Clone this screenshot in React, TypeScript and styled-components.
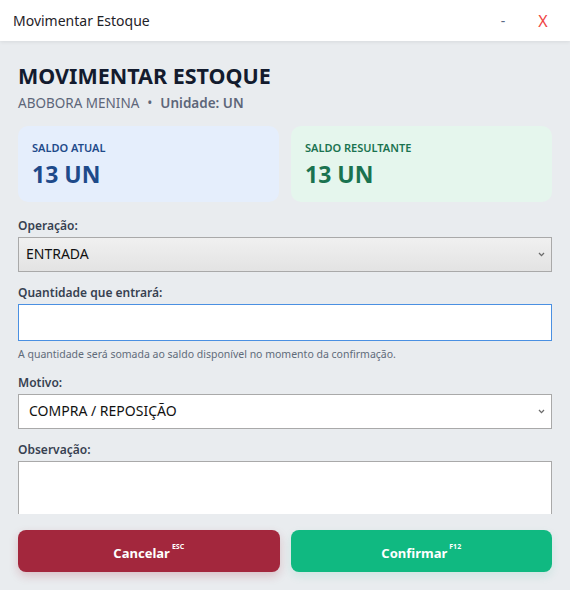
import React from 'react';
import styled, { createGlobalStyle } from 'styled-components';

const GlobalStyle = createGlobalStyle`
  html, body {
    margin: 0;
    padding: 0;
    height: 100%;
    background: #e9ecef;
  }
  #root {
    height: 100%;
  }
  * {
    box-sizing: border-box;
  }
`;

const Window = styled.div`
  height: 590px;
  display: flex;
  flex-direction: column;
  background: #e9ecef;
  font-family: 'Noto Sans', 'Open Sans', sans-serif;
  color: #1f2937;
  overflow: hidden;
`;

const TitleBar = styled.div`
  height: 41px;
  flex-shrink: 0;
  display: flex;
  align-items: center;
  padding: 0 7px 0 13px;
  background: #ffffff;
  box-shadow: 0 1px 4px rgba(0, 0, 0, 0.08);
  position: relative;
  z-index: 1;
`;

const WindowTitle = styled.div`
  flex: 1;
  font-size: 14px;
  color: #1f2328;
`;

const WindowButton = styled.button<{ $danger?: boolean }>`
  border: none;
  background: transparent;
  padding: 0;
  width: 40px;
  text-align: center;
  font-family: inherit;
  font-size: ${({ $danger }) => ($danger ? '16px' : '14px')};
  color: ${({ $danger }) => ($danger ? '#ef4444' : '#5b6b85')};
  cursor: pointer;
`;

const Content = styled.div`
  flex: 1;
  min-height: 0;
  overflow: hidden;
  padding: 20px 18px 0;
  display: flex;
  flex-direction: column;
`;

const Heading = styled.h1`
  margin: 0;
  font-size: 21.5px;
  font-weight: 700;
  color: #131b2e;
  line-height: 30px;
`;

const Subtitle = styled.div`
  margin-top: 2px;
  font-size: 13.5px;
  color: #5d6679;
  display: flex;
  align-items: center;
  gap: 8px;
  line-height: 20px;
`;

const Strong = styled.span`
  font-weight: 600;
`;

const Cards = styled.div`
  margin-top: 13px;
  margin-bottom: 3px;
  display: grid;
  grid-template-columns: 1fr 1fr;
  gap: 12px;
`;

const Card = styled.div<{ $tone: 'blue' | 'green' }>`
  height: 76px;
  border-radius: 10px;
  padding: 14px 14px;
  background: ${({ $tone }) => ($tone === 'blue' ? '#e5eefc' : '#e5f6ed')};
  color: ${({ $tone }) => ($tone === 'blue' ? '#1e4a8a' : '#1a7350')};
`;

const CardLabel = styled.div`
  font-size: 11px;
  font-weight: 600;
  line-height: 16px;
`;

const CardValue = styled.div`
  margin-top: 4px;
  font-size: 23px;
  font-weight: 700;
  line-height: 28px;
`;

const Field = styled.div<{ $gap?: number }>`
  margin-top: ${({ $gap }) => $gap ?? 13}px;
  display: flex;
  flex-direction: column;
`;

const Label = styled.label`
  font-size: 12px;
  font-weight: 600;
  color: #374151;
  line-height: 16px;
  margin-bottom: 3px;
`;

const SelectBox = styled.div<{ $filled?: boolean }>`
  height: 35px;
  display: flex;
  align-items: center;
  justify-content: space-between;
  padding: 0 6px 3px ${({ $filled }) => ($filled ? '7px' : '10px')};
  border: 1px solid #a9a9a9;
  background: ${({ $filled }) =>
    $filled ? 'linear-gradient(#f0f0f0, #e3e3e3)' : '#ffffff'};
  font-size: 14px;
  color: #111;
`;

const ChevronIcon = styled.svg`
  width: 7px;
  height: 5px;
  margin-top: 3px;
`;

const TextInput = styled.input`
  height: 37px;
  border: 1px solid #4a90e2;
  background: #ffffff;
  outline: none;
  font-family: inherit;
  font-size: 14px;
  padding: 0 8px;
`;

const Hint = styled.div`
  margin-top: 6px;
  font-size: 10.5px;
  color: #5f6b7a;
  line-height: 14px;
`;

const TextArea = styled.textarea`
  height: 70px;
  flex-shrink: 0;
  border: 1px solid #a9a9a9;
  background: #ffffff;
  resize: none;
  font-family: inherit;
  font-size: 14px;
  padding: 6px 8px;
`;

const Footer = styled.div`
  flex-shrink: 0;
  display: grid;
  grid-template-columns: 1fr 1fr;
  gap: 11px;
  padding: 16px 18px 18px;
`;

const ActionButton = styled.button<{ $variant: 'cancel' | 'confirm' }>`
  height: 42px;
  border: none;
  border-radius: 8px;
  font-family: inherit;
  font-size: 13px;
  font-weight: 700;
  color: #ffffff;
  background: ${({ $variant }) => ($variant === 'cancel' ? '#a3273d' : '#10b981')};
  box-shadow: ${({ $variant }) =>
    $variant === 'cancel'
      ? '0 4px 10px rgba(163, 39, 61, 0.22)'
      : '0 4px 10px rgba(16, 185, 129, 0.12)'};
  cursor: pointer;
  padding-top: 3px;
`;

const Shortcut = styled.sup`
  font-size: 7px;
  font-weight: 700;
  margin-left: 2px;
  vertical-align: 9px;
`;

function Chevron() {
  return (
    <ChevronIcon viewBox="0 0 7 5">
      <path d="M1 1 L3.5 3.6 L6 1" fill="none" stroke="#6b6b6b" strokeWidth="1.3" />
    </ChevronIcon>
  );
}

export default function App() {
  return (
    <>
      <GlobalStyle />
      <Window>
        <TitleBar>
          <WindowTitle>Movimentar Estoque</WindowTitle>
          <WindowButton>-</WindowButton>
          <WindowButton $danger>X</WindowButton>
        </TitleBar>

        <Content>
          <Heading>MOVIMENTAR ESTOQUE</Heading>
          <Subtitle>
            <span>ABOBORA MENINA</span>
            <span>•</span>
            <Strong>Unidade: UN</Strong>
          </Subtitle>

          <Cards>
            <Card $tone="blue">
              <CardLabel>SALDO ATUAL</CardLabel>
              <CardValue>13 UN</CardValue>
            </Card>
            <Card $tone="green">
              <CardLabel>SALDO RESULTANTE</CardLabel>
              <CardValue>13 UN</CardValue>
            </Card>
          </Cards>

          <Field>
            <Label>Operação:</Label>
            <SelectBox $filled>
              <span>ENTRADA</span>
              <Chevron />
            </SelectBox>
          </Field>

          <Field>
            <Label>Quantidade que entrará:</Label>
            <TextInput />
            <Hint>A quantidade será somada ao saldo disponível no momento da confirmação.</Hint>
          </Field>

          <Field $gap={14}>
            <Label>Motivo:</Label>
            <SelectBox>
              <span>COMPRA / REPOSIÇÃO</span>
              <Chevron />
            </SelectBox>
          </Field>

          <Field>
            <Label>Observação:</Label>
            <TextArea />
          </Field>
        </Content>

        <Footer>
          <ActionButton $variant="cancel">
            Cancelar<Shortcut>ESC</Shortcut>
          </ActionButton>
          <ActionButton $variant="confirm">
            Confirmar<Shortcut>F12</Shortcut>
          </ActionButton>
        </Footer>
      </Window>
    </>
  );
}
